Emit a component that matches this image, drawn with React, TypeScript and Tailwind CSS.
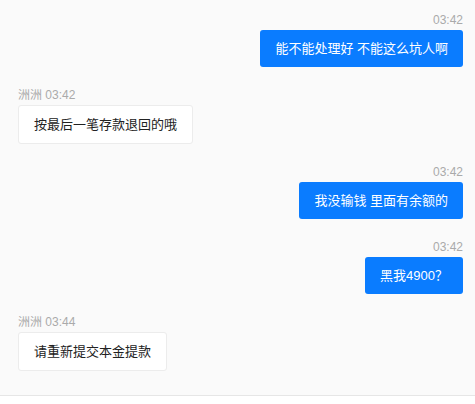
const messages = [
  { mine: true, name: "", time: "03:42", text: "能不能处理好 不能这么坑人啊" },
  { mine: false, name: "洲洲", time: "03:42", text: "按最后一笔存款退回的哦" },
  { mine: true, name: "", time: "03:42", text: "我没输钱 里面有余额的" },
  { mine: true, name: "", time: "03:42", text: "黑我4900？" },
  { mine: false, name: "洲洲", time: "03:44", text: "请重新提交本金提款" },
]

export default function App() {
  return (
    <div
      className="w-[475px] h-[404px] bg-[#fafafa] flex flex-col"
      style={{ fontFamily: '"Liberation Sans", "Noto Sans CJK SC", sans-serif' }}
    >
      <div className="h-[396px] border-b border-[#e6e6e6] pt-3 pl-[18px] pr-3 flex flex-col gap-5">
        {messages.map((m, i) => (
          <div key={i} className={`flex flex-col gap-[2px] ${m.mine ? "items-end" : "items-start"}`}>
            <div className="text-[12px] leading-4 text-[#aaaaaa]">
              {m.name ? `${m.name} ${m.time}` : m.time}
            </div>
            {m.mine ? (
              <div className="bg-[#0a7cff] text-white text-[13px] leading-[21px] py-2 px-[15px] rounded-[3px]">
                {m.text}
              </div>
            ) : (
              <div className="bg-white text-[#222] text-[13px] leading-[21px] py-2 px-[15px] rounded-[3px] border border-[#ececec]">
                {m.text}
              </div>
            )}
          </div>
        ))}
      </div>
      <div className="flex-1 bg-white" />
    </div>
  )
}
